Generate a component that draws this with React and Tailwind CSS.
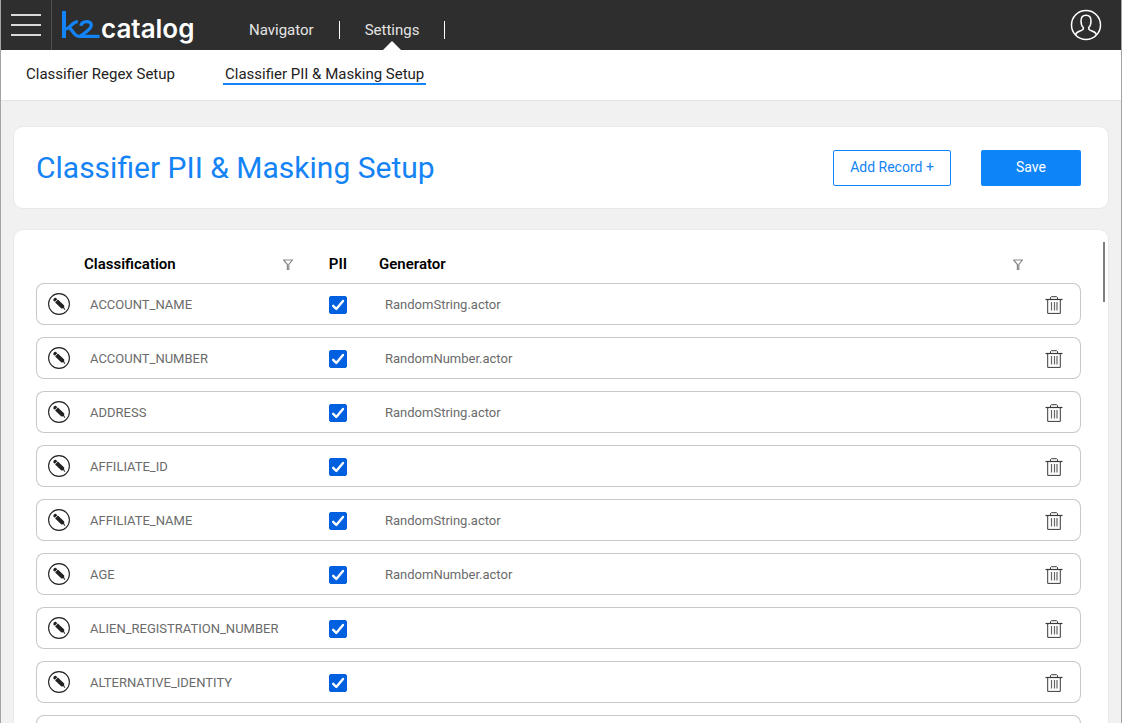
import { useState } from "react";

const initialRecords = [
  { name: "ACCOUNT_NAME", generator: "RandomString.actor" },
  { name: "ACCOUNT_NUMBER", generator: "RandomNumber.actor" },
  { name: "ADDRESS", generator: "RandomString.actor" },
  { name: "AFFILIATE_ID", generator: "" },
  { name: "AFFILIATE_NAME", generator: "RandomString.actor" },
  { name: "AGE", generator: "RandomNumber.actor" },
  { name: "ALIEN_REGISTRATION_NUMBER", generator: "" },
  { name: "ALTERNATIVE_IDENTITY", generator: "" },
  { name: "", generator: "" },
];

function MenuIcon() {
  return (
    <svg width="30" height="22" viewBox="0 0 30 22" fill="#d9d9d9" aria-hidden="true">
      <rect width="30" height="2" />
      <rect y="10" width="30" height="2" />
      <rect y="20" width="30" height="2" />
    </svg>
  );
}

function K2Mark() {
  return (
    <svg width="38" height="28" viewBox="0 0 38 28" fill="none" stroke="#1483f5" strokeWidth="3.3" aria-hidden="true">
      <path d="M2 0V27" strokeWidth="4" />
      <path d="M3 18.200C8 18.200 10 10.600 15.800 10.600" />
      <path d="M7 16.500C11 18.500 11.500 25.300 17 25.300H37.500" />
      <path d="M18.800 14.800C20 9.200 29.300 9.200 29.300 14.300C29.300 18 23.500 21.800 18 25.300" />
    </svg>
  );
}

function UserIcon() {
  return (
    <svg width="32" height="32" viewBox="0 0 32 32" fill="none" stroke="#fff" strokeWidth="1.5" aria-hidden="true">
      <circle cx="16" cy="16" r="14.500" />
      <path d="M5.500 26C6 23.500 7.500 22.800 10 22C12.500 21.200 13.300 20.800 13.300 19.500V18.500C11.500 17 11 15 11 12C11 8.500 12.800 6.300 16 6.300C19.200 6.300 21 8.500 21 12C21 15 20.500 17 18.700 18.500V19.500C18.700 20.800 19.500 21.200 22 22C24.500 22.800 26 23.500 26.500 26" />
    </svg>
  );
}

function PencilIcon() {
  return (
    <svg width="22" height="22" viewBox="0 0 22 22" aria-hidden="true">
      <circle cx="11" cy="11" r="10.400" fill="none" stroke="#222" strokeWidth="1.1" />
      <g fill="#222">
        <path d="M5.500 7.400C5 5.800 6.600 4.400 8 5L9.300 6.200L6.800 8.800Z" />
        <path d="M9.900 6.500L16.200 12.400L16.200 15.300L13.400 15.400L7.100 9.400Z" />
        <path d="M15.300 15.700L16.700 14.900L17.300 17.200Z" />
      </g>
    </svg>
  );
}

function FilterIcon() {
  return (
    <svg width="10" height="11" viewBox="0 0 10 11" fill="none" stroke="#8a8a8a" strokeWidth="1.200" aria-hidden="true">
      <path d="M0.600 1H9.400L5.800 5.500V10.400H4.400V5.500Z" />
    </svg>
  );
}

function TrashIcon() {
  return (
    <svg width="18" height="18" viewBox="0 0 18 18" fill="none" stroke="#3a3a3a" aria-hidden="true">
      <path d="M0.500 3.500H17.500" strokeWidth="1.200" />
      <path d="M5.500 3V1.500L6.500 0.700H11.500L12.500 1.500V3" />
      <path d="M2.700 4V17.400H15.300V4" />
      <path d="M6.500 6V14.500M9.500 6V14.500M12 6V14.500" strokeWidth="1.200" stroke="#666" />
    </svg>
  );
}

function PiiCheckbox({ label }) {
  return (
    <span className="relative mx-auto flex w-[18px]">
      <input
        type="checkbox"
        defaultChecked
        aria-label={label}
        className="peer size-[18px] appearance-none rounded-xs border border-gray-500 checked:border-[#0060df] checked:bg-[#0060df]"
      />
      <svg
        className="pointer-events-none absolute inset-0 hidden peer-checked:block"
        width="18"
        height="18"
        viewBox="0 0 18 18"
        fill="none"
        stroke="#fff"
        strokeWidth="2.400"
        strokeLinecap="round"
        strokeLinejoin="round"
        aria-hidden="true"
      >
        <path d="M4.200 9.800L7.300 13L14 5" />
      </svg>
    </span>
  );
}

function RecordRow({ record, onDelete }) {
  const cell = "border-y border-[#c8c8c8] p-0";
  return (
    <tr className="h-[42px]">
      <td className={`${cell} rounded-l-lg border-l`}>
        <button type="button" aria-label={`Edit ${record.name}`} className="ml-[11px] flex">
          <PencilIcon />
        </button>
      </td>
      <td className={`${cell}`}>
        <div className="pt-0.5 pl-1.5">{record.name}</div>
      </td>
      <td className={`${cell}`}>
        <div className="pt-0.5">
          <PiiCheckbox label={`PII ${record.name}`} />
        </div>
      </td>
      <td className={`${cell}`}>
        <div className="pt-0.5 pl-1.5">{record.generator}</div>
      </td>
      <td className={`${cell} rounded-r-lg border-r`}>
        <button type="button" aria-label={`Delete ${record.name}`} onClick={onDelete} className="mx-auto flex pt-0.5">
          <TrashIcon />
        </button>
      </td>
    </tr>
  );
}

export default function App() {
  const [records, setRecords] = useState(initialRecords);

  return (
    <div className="flex h-screen flex-col overflow-hidden border-x border-[#a3a3a3] bg-[#f1f1f1] font-['Roboto',sans-serif]">
      <header className="flex h-[50px] shrink-0 bg-[#2e2e2e] text-[15px] text-[#e4e4e4]">
        <button type="button" aria-label="Menu" className="flex w-[51px] items-center justify-center border-r border-[#505050]">
          <MenuIcon />
        </button>
        <a href="#home" aria-label="k2catalog" className="flex w-[172px] items-start pt-[11px] pl-2.5">
          <K2Mark />
          <span className="pl-px font-['Inter',sans-serif] text-[26px] leading-9 font-semibold text-white">catalog</span>
        </a>
        <nav className="flex items-center pt-[10px]">
          <a href="#navigator" className="px-[25px]">Navigator</a>
          <span className="h-[18px] w-px bg-white" />
          <a href="#settings" className="relative flex h-full items-center px-[25px]">
            Settings
            <svg className="absolute bottom-0 left-1/2 -translate-x-1/2" width="18" height="9" viewBox="0 0 18 9" fill="#fff" aria-hidden="true">
              <path d="M0 9L9 0L18 9Z" />
            </svg>
          </a>
          <span className="h-[18px] w-px bg-white" />
        </nav>
        <button type="button" aria-label="Account" className="ml-auto pr-[19px]">
          <UserIcon />
        </button>
      </header>

      <nav className="flex h-[51px] shrink-0 items-start gap-[46px] border-b border-[#e2e2e2] bg-white px-[23px] pt-[15px] text-[15px] text-[#222]">
        <a href="#regex" className="border-b-2 border-transparent px-0.5 leading-[18px]">Classifier Regex Setup</a>
        <a href="#pii" className="border-b-2 border-[#1483f5] px-0.5 leading-[18px]">Classifier PII &amp; Masking Setup</a>
      </nav>

      <main className="flex min-h-0 flex-1 flex-col gap-5 px-3 pt-[25px]">
        <section className="flex h-[83px] shrink-0 items-center justify-between rounded-[10px] border border-[#e9e9e9] bg-white pr-[27px] pl-[22px]">
          <h1 className="text-[30px] leading-9 text-[#1483f5]">Classifier PII &amp; Masking Setup</h1>
          <div className="flex gap-[30px] text-sm">
            <button
              type="button"
              onClick={() => setRecords([{ name: "", generator: "" }, ...records])}
              className="h-9 w-[118px] rounded-xs border border-[#0d84f7] bg-white pb-0.5 text-[#1483f5]"
            >
              Add Record +
            </button>
            <button type="button" className="h-9 w-[100px] rounded-xs bg-[#0d84f7] pb-0.5 text-white">Save</button>
          </div>
        </section>

        <section className="relative min-h-0 flex-1 overflow-hidden rounded-t-[10px] border border-b-0 border-[#e9e9e9] bg-white pt-3.5 pr-[27px] pl-[22px]">
          <table className="w-full table-fixed border-separate border-spacing-x-0 border-spacing-y-3 text-[13px] text-[#6b6b6b]">
            <colgroup>
              <col className="w-12" />
              <col className="w-[213px]" />
              <col className="w-[82px]" />
              <col />
              <col className="w-[54px]" />
            </colgroup>
            <thead className="text-[15px] leading-[13px] text-black">
              <tr className="h-[15px]">
                <th className="p-0" aria-label="Edit" />
                <th className="px-0 pt-0.5 pb-0 font-semibold">
                  <div className="flex items-center justify-between pr-1">
                    Classification
                    <button type="button" className="flex" aria-label="Filter classification"><FilterIcon /></button>
                  </div>
                </th>
                <th className="px-0 pt-0.5 pb-0 font-semibold">PII</th>
                <th className="px-0 pt-0.5 pb-0 font-semibold">
                  <div className="flex items-center justify-between pr-1">
                    Generator
                    <button type="button" className="flex" aria-label="Filter generator"><FilterIcon /></button>
                  </div>
                </th>
                <th className="p-0" aria-label="Delete" />
              </tr>
            </thead>
            <tbody>
              {records.map((record, index) => (
                <RecordRow
                  key={`${record.name}-${index}`}
                  record={record}
                  onDelete={() => setRecords(records.filter((_, i) => i !== index))}
                />
              ))}
            </tbody>
          </table>
          <div className="absolute top-3 right-[3px] h-[60px] w-0.5 bg-[#7d7f84]" />
        </section>
      </main>
    </div>
  );
}
